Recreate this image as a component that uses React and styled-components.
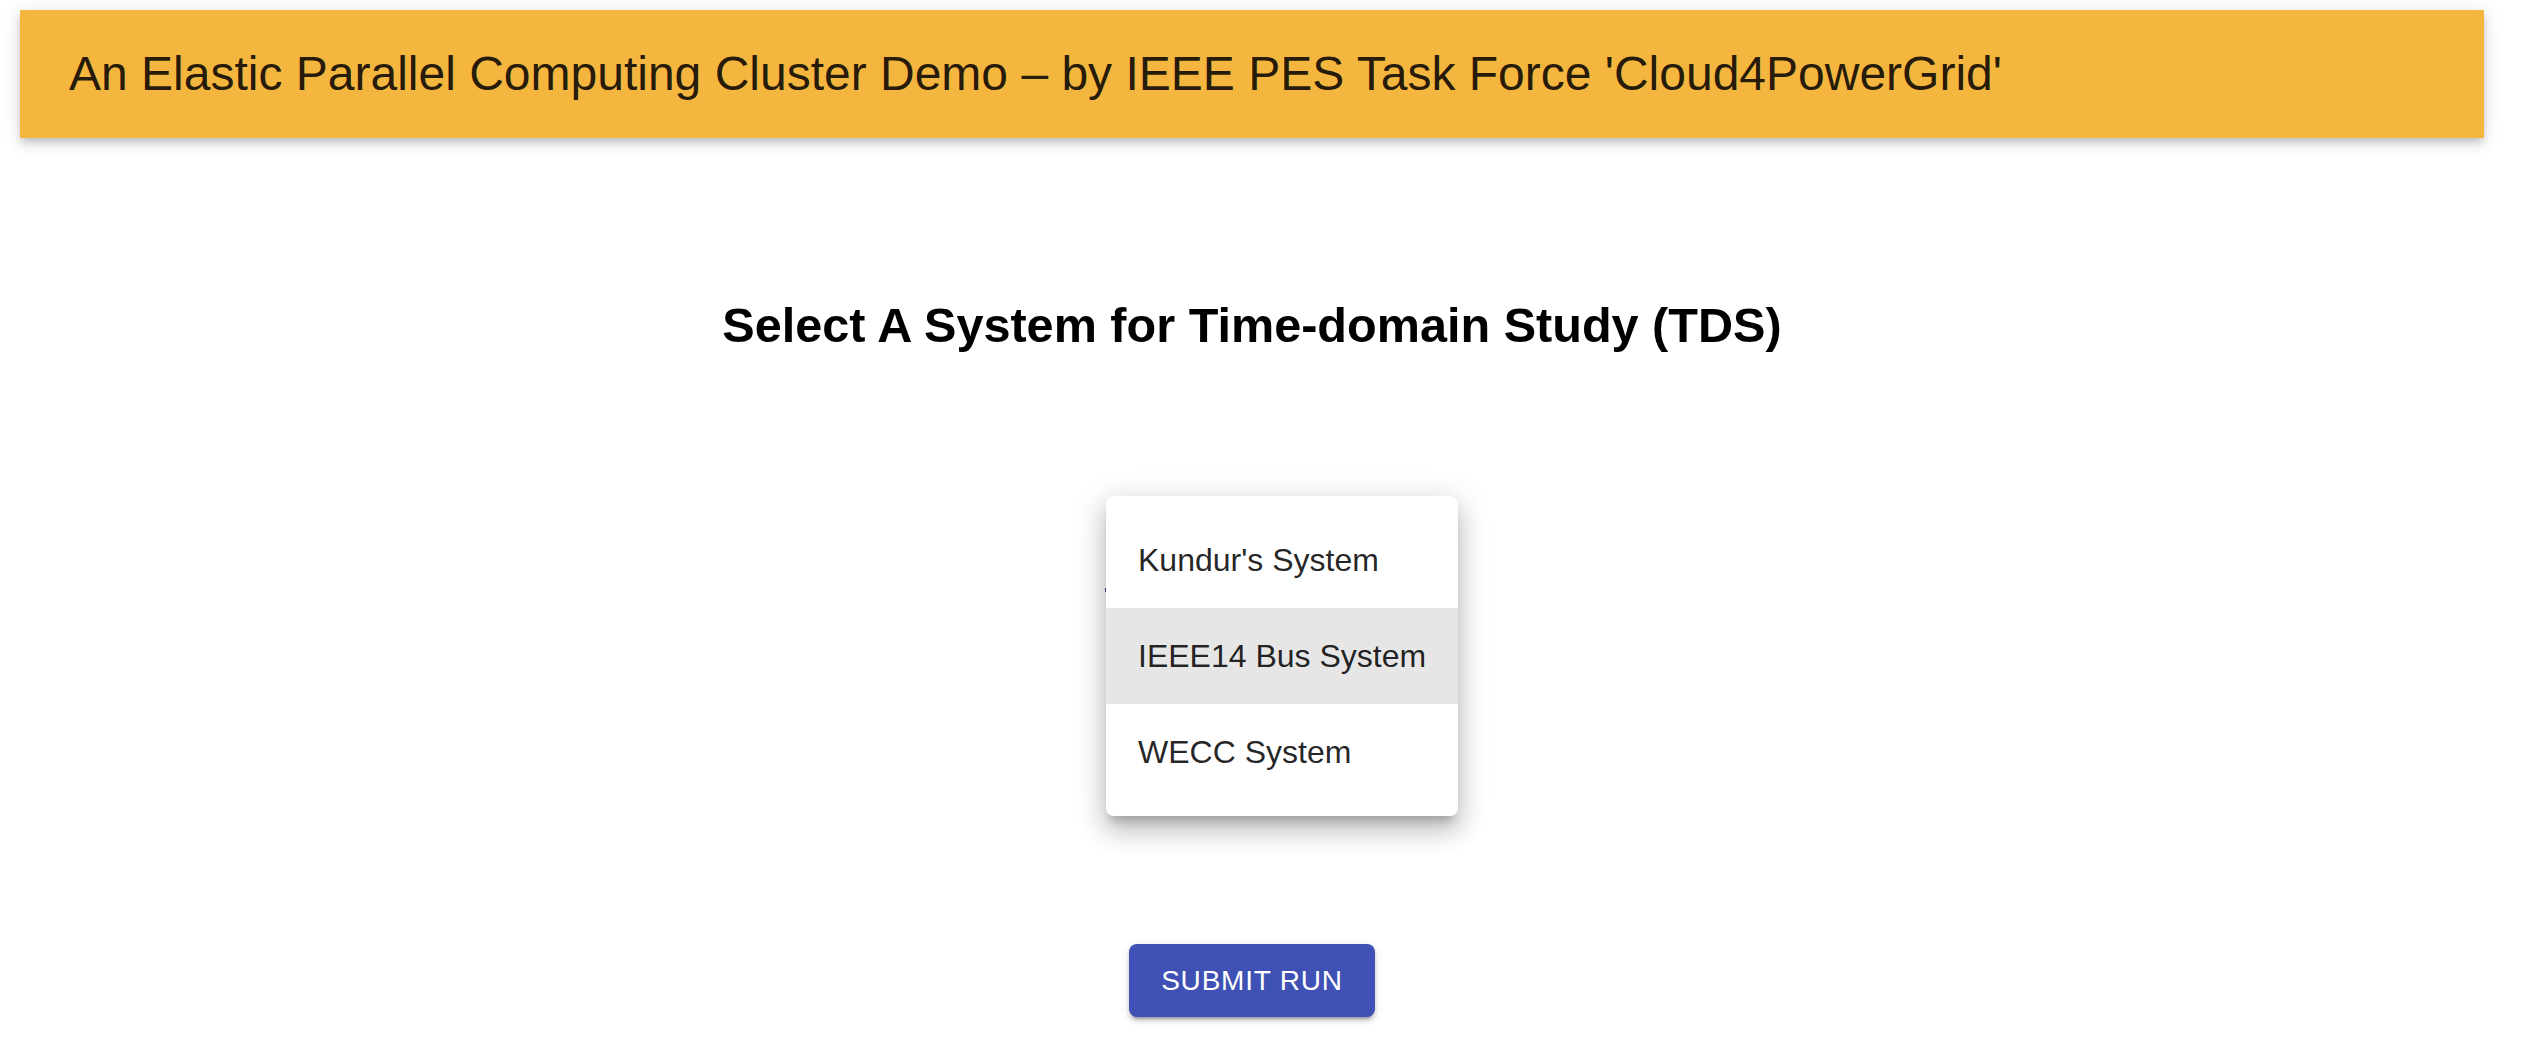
import React, { useState } from "react";
import styled, { createGlobalStyle } from "styled-components";

const GlobalStyle = createGlobalStyle`
  * {
    box-sizing: border-box;
  }
  body {
    margin: 0;
    background-color: #ffffff;
    font-family: "Liberation Sans", Arial, sans-serif;
  }
`;

const Page = styled.div`
  padding: 10px 40px 0 20px;
  min-height: 1050px;
`;

const Header = styled.header`
  height: 128px;
  display: flex;
  align-items: center;
  padding-left: 49px;
  background-color: #f4b63f;
  box-shadow: 0px 4px 8px -2px rgba(0, 0, 0, 0.2), 0px 8px 10px 1px rgba(0, 0, 0, 0.06),
    0px 2px 20px 2px rgba(0, 0, 0, 0.08);
`;

const HeaderTitle = styled.h1`
  margin: 0;
  font-size: 48px;
  font-weight: 400;
  line-height: 56px;
  color: rgba(0, 0, 0, 0.87);
`;

const Main = styled.main`
  display: flex;
  flex-direction: column;
  align-items: center;
`;

const Title = styled.h2`
  margin: 159px 0 0;
  font-size: 48.6px;
  font-weight: 700;
  line-height: 56px;
  color: #000000;
`;

const SelectField = styled.div`
  position: relative;
  width: 294px;
  height: 80px;
  margin-top: 159px;
  border-bottom: 4px solid #303f9f;
`;

const Menu = styled.ul`
  position: absolute;
  left: 1px;
  top: -16px;
  z-index: 10;
  width: 352px;
  margin: 0;
  padding: 16px 0;
  list-style: none;
  background-color: #ffffff;
  border-radius: 8px;
  box-shadow: 0px 10px 10px -5px rgba(0, 0, 0, 0.2), 0px 16px 24px 2px rgba(0, 0, 0, 0.14),
    0px 6px 30px 5px rgba(0, 0, 0, 0.12);
`;

const MenuItem = styled.li`
  height: 96px;
  display: flex;
  align-items: center;
  padding: 0 32px;
  font-size: 32px;
  line-height: 48px;
  color: rgba(0, 0, 0, 0.87);
  white-space: nowrap;
  cursor: pointer;
  background-color: ${(p) => (p.$active ? "#e6e6e6" : "transparent")};
`;

const SubmitButton = styled.button`
  margin-top: 352px;
  width: 246px;
  height: 73px;
  border: none;
  border-radius: 8px;
  background-color: #3f51b5;
  color: #ffffff;
  font-family: "Liberation Sans", Arial, sans-serif;
  font-size: 28px;
  font-weight: 500;
  letter-spacing: 0.8px;
  text-transform: uppercase;
  cursor: pointer;
  box-shadow: 0px 6px 2px -4px rgba(0, 0, 0, 0.2), 0px 4px 4px 0px rgba(0, 0, 0, 0.14),
    0px 2px 10px 0px rgba(0, 0, 0, 0.12);
`;

const systems = ["Kundur's System", "IEEE14 Bus System", "WECC System"];

const App = () => {
  const [active, setActive] = useState(1);

  return (
    <>
      <GlobalStyle />
      <Page>
        <Header>
          <HeaderTitle>
            An Elastic Parallel Computing Cluster Demo – by IEEE PES Task Force 'Cloud4PowerGrid'
          </HeaderTitle>
        </Header>
        <Main>
          <Title>Select A System for Time-domain Study (TDS)</Title>
          <SelectField>
            <Menu>
              {systems.map((s, i) => (
                <MenuItem key={s} $active={i === active} onMouseEnter={() => setActive(i)}>
                  {s}
                </MenuItem>
              ))}
            </Menu>
          </SelectField>
          <SubmitButton>Submit Run</SubmitButton>
        </Main>
      </Page>
    </>
  );
};

export default App;
